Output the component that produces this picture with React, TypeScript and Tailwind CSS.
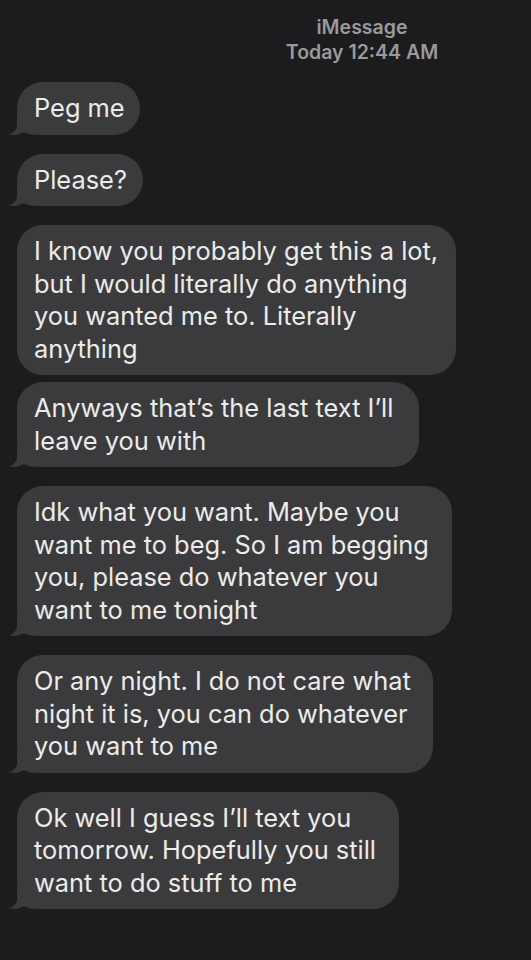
const messages = [
  { lines: ["Peg me"], w: "w-[123px]", tail: true },
  { lines: ["Please?"], w: "w-[126px]", tail: true },
  {
    lines: [
      "I know you probably get this a lot,",
      "but I would literally do anything",
      "you wanted me to. Literally",
      "anything",
    ],
    w: "w-[439px]",
    tail: false,
  },
  { lines: ["Anyways that\u2019s the last text I\u2019ll", "leave you with"], w: "w-[402px]", tail: true },
  {
    lines: [
      "Idk what you want. Maybe you",
      "want me to beg. So I am begging",
      "you, please do whatever you",
      "want to me tonight",
    ],
    w: "w-[435px]",
    tail: true,
  },
  {
    lines: ["Or any night. I do not care what", "night it is, you can do whatever", "you want to me"],
    w: "w-[416px]",
    tail: true,
  },
  {
    lines: ["Ok well I guess I\u2019ll text you", "tomorrow. Hopefully you still", "want to do stuff to me"],
    w: "w-[382px]",
    tail: true,
  },
];

const Tail = () => (
  <svg className="absolute -left-[9px] bottom-0" width="30" height="22" viewBox="0 0 30 22">
    <path d="M9 0 L9 12 C9 17 5 20 0.5 21.6 C8 22.6 13 21 16 19 C19 21 23 22 30 22 L30 0 Z" fill="#3b3b3d" />
  </svg>
);

const App = () => {
  return (
    <div className="w-[531px] h-[960px] bg-[#1c1c1e] overflow-hidden font-['Inter','Liberation_Sans',sans-serif]">
      {/* header */}
      <div className="ml-[212px] w-[300px] pt-[15px] text-center text-[19.5px] leading-[25px] font-semibold text-[#9a9a9c]">
        <div>iMessage</div>
        <div>Today 12:44 AM</div>
      </div>

      <div className="flex flex-col pl-[17px] pt-[17px]">
        {messages.map((m, i) => (
          <div
            key={i}
            className={`relative ${m.w} rounded-[26px] bg-[#3b3b3d] pl-[17px] py-[10px] text-[25.4px] leading-[32.5px] text-[#ebebeb] whitespace-nowrap ${
              i === 0 ? "" : messages[i - 1].tail ? "mt-[19px]" : "mt-[7px]"
            }`}
          >
            {m.tail && <Tail />}
            <span className="relative">
              {m.lines.map((l, j) => (
                <span key={j} className="block">
                  {l}
                </span>
              ))}
            </span>
          </div>
        ))}
      </div>
    </div>
  );
};

export default App;
